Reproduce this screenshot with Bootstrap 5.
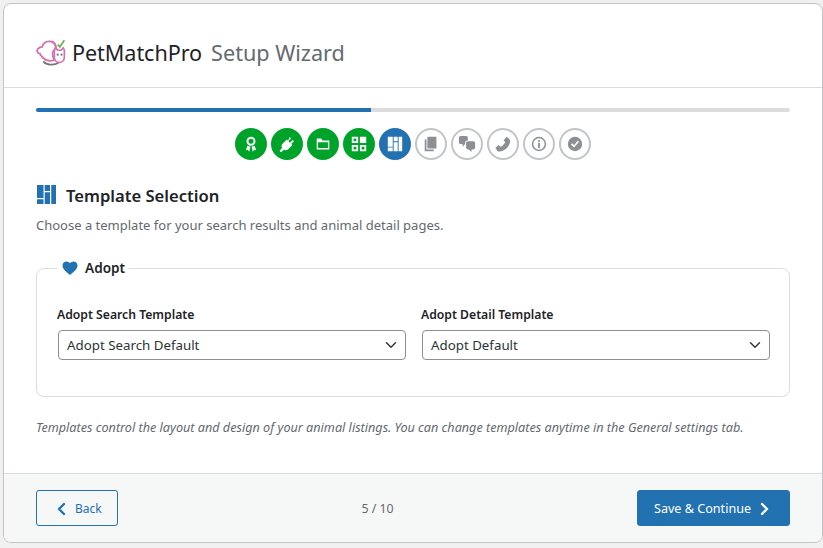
<!DOCTYPE html>
<html lang="en"><head><meta charset="utf-8"><title>PetMatchPro Setup Wizard</title>
<link rel="stylesheet" href="https://cdn.jsdelivr.net/npm/bootstrap@5.3.0/dist/css/bootstrap.min.css">
<style>
html,body{height:548px;overflow:hidden}
body{background:#f0f0f1;font-family:"Noto Sans","Open Sans",sans-serif;color:#1d2327;padding:3px 0 5px 3px}
.wiz{height:540px;width:820px;background:#fff;border:1px solid #c3c4c7;border-radius:8px;overflow:hidden;display:flex;flex-direction:column}
.wiz-head{height:84px;border-bottom:1px solid #dcdcde;padding:14px 32px 0;display:flex;align-items:center;gap:6px}
.wiz-title{font-size:21.6px;font-weight:400;margin:0;line-height:1.2;display:flex;gap:9px}
.wiz-title b{font-weight:400;letter-spacing:-.07px}
.wiz-title span{color:#646970}
.wiz-body{flex:1;padding:20px 32px 0}
.bar-track{height:4px;background:#dcdcde;border-radius:2px;overflow:hidden}
.bar-fill{height:4px;background:#2271b1}
.steps{margin-top:16px;gap:4px}
.dot{width:32px;height:32px;border-radius:50%;display:flex;align-items:center;justify-content:center;border:2px solid #c3c4c7;background:#fff;color:#8c8f94}
.dot.ok{background:#00a32a;border-color:#00a32a;color:#fff}
.dot.cur{background:#2271b1;border-color:#2271b1;color:#fff}
.dot svg{width:18px;height:18px;fill:currentColor;display:block}
.sec-head{margin-top:24px;gap:10px;height:24px}
.sec-head svg{margin:-4px 0 0 1px}
.sec-title{font-size:16.6px;font-weight:600;margin:0;line-height:24px}
.sec-desc{font-size:13px;color:#646970;margin:6px 0 0;line-height:22px}
.field-box{border:1px solid #dcdcde;border-radius:8px;margin-top:22px;height:139px;padding:0 20px}
.field-box legend{float:none;width:auto;font-size:13.6px;font-weight:600;padding:0 3px 0 5px;line-height:20px;display:flex;align-items:center;gap:7px;margin:0 0 27px;color:#1d2327}
.field-box legend svg{width:16px;height:16px;fill:#2271b1}
.cols{gap:16px}
.cols>div{flex:1 1 0;min-width:0}
.flabel{font-size:12.2px;font-weight:600;line-height:20px;display:block;margin-bottom:5px}
.pick{height:30px;padding:2px 24px 0 8px;margin-left:1px;font-size:13.3px;color:#2c3338;border:1px solid #8c8f94;border-radius:4px;background-size:16px 12px;background-position:right 6px center;width:100%}
.hint{font-size:12.64px;font-style:italic;color:#646970;margin:20px 0 0;line-height:20px}
.wiz-foot{height:69px;background:#f6f7f7;border-top:1px solid #dcdcde;padding:16px 32px 0;display:flex;justify-content:space-between;align-items:flex-start}
.foot-mid{font-size:12.3px;color:#646970;line-height:38px}
.go,.back{height:36px;border-radius:3px;display:flex;align-items:center;padding:2px 0 0}
.back{width:82px;font-size:12px;color:#2271b1;border:1px solid #2271b1;background:transparent;gap:9px;padding-left:20px}
.go{width:153px;font-size:12.6px;background:#2271b1;border:1px solid #2271b1;color:#fff;gap:9px;padding-left:16px}
.go svg,.back svg{width:9px;height:14px;fill:none;stroke:currentColor;stroke-width:2.4;stroke-linecap:round;stroke-linejoin:round}
</style></head><body>
<div class="wiz">
<header class="wiz-head">
<svg width="30" height="30" viewBox="1.500 3 27 27" aria-hidden="true">
<path d="M8 24c3 3.500 10 3.800 14 1" fill="none" stroke="#777" stroke-width="1.600"/>
<path d="M3 13c1-1 2-2 4-2 1-3 3-5 6-5 3 0 5 1 6 4l1 3c-1 0-3 1-3.500 3-.5 3 .5 5 1.500 7-4 1-8 0-10-2-2-2-3-3-3-4-2 0-3-2-2-4z" fill="#fff" stroke="#d46fb0" stroke-width="1.600"/>
<path d="M15 6c3 0 5 3 4 7" fill="none" stroke="#d46fb0" stroke-width="1.500"/>
<path d="M18 14l1-2 2 2h3l2-2 1 2v6c0 3-2 5-4.500 5S18 23 18 20z" fill="#fff" stroke="#d46fb0" stroke-width="1.500"/>
<circle cx="21" cy="18" r="1" fill="#777"/><circle cx="24.500" cy="18" r="1" fill="#777"/>
<path d="M21 9l2 2 4-6" fill="none" stroke="#68b34a" stroke-width="1.600"/>
</svg>
<h1 class="wiz-title"><b>PetMatchPro</b><span>Setup Wizard</span></h1>
</header>
<main class="wiz-body">
<div class="bar-track"><div class="bar-fill" style="width:44.4%"></div></div>
<div class="steps d-flex justify-content-center">
<div class="dot ok"><svg viewBox="0 0 20 20"><path fill-rule="evenodd" d="M10 2a5 5 0 1 0 0 10 5 5 0 0 0 0-10zm0 2.200a2.800 2.800 0 1 1 0 5.600 2.800 2.800 0 0 1 0-5.600z"/><path d="M6 12l-1.800 5 2.300-.6L8 18.500l1.300-5.500zm8 0l1.800 5-2.300-.6L12 18.500l-1.300-5.500z"/></svg></div>
<div class="dot ok"><svg viewBox="0 0 20 20"><path d="M13.100 2.300l1.500 1.500-3 3 1.700 1.700 3-3 1.400 1.400-3 3 1.300 1.300-4.700 4.600c-1.300 1.300-3.300 1.500-4.800.6L3.400 19.200 1.700 17.500l2.800-3c-.9-1.500-.7-3.500.6-4.800L9.800 5l1.300 1.300z"/></svg></div>
<div class="dot ok"><svg viewBox="0 0 20 20"><path fill-rule="evenodd" d="M3 4h5l1.500 2H17v10H3zm1.500 4v6.500h11V8z"/></svg></div>
<div class="dot ok"><svg viewBox="0 0 20 20"><path fill-rule="evenodd" d="M2 2h7v7H2zM11 2h7v7h-7zM2 11h7v7H2zM11 11h7v7h-7zM4 4v3h3V4zM13 13v3h3v-3zM4 13v3h3v-3z"/></svg></div>
<div class="dot cur"><svg viewBox="0 0 20 20"><path d="M2 2h5.500v11H2zM8.500 2h4.500v5H8.500zM14 2h4v16h-4zM2 14h5.500v4H2zM8.500 8h4.500v10H8.500z"/></svg></div>
<div class="dot"><svg viewBox="0 0 20 20"><path d="M6 15V2h10v13zM5 16h8v2H3V5h2z"/></svg></div>
<div class="dot"><svg viewBox="0 0 20 20"><path d="M11 6h-.8C9.100 6 8 7.200 8 8.200V10l-3 3v-3H3c-1.100 0-2-.9-2-2V3c0-1.100.9-2 2-2h6c1.100 0 2 .9 2 2zm0 1h6c1.100 0 2 .9 2 2v5c0 1.100-.9 2-2 2h-2v3l-3-3h-1c-1.100 0-2-.9-2-2V9c0-1.100.9-2 2-2z"/></svg></div>
<div class="dot"><svg viewBox="0 0 20 20"><path d="M14 2l4 3.500c.3 4-2 7.500-4.500 9.800C11 17.500 7 18.800 4 18l-2.500-3.500 3.500-3.300 2.500 1.800c2.200-1 4-3 5-5.300L10.500 6z"/></svg></div>
<div class="dot"><svg viewBox="0 0 20 20"><path fill-rule="evenodd" d="M10 2a8 8 0 1 0 0 16 8 8 0 0 0 0-16zm0 1.700a6.300 6.300 0 1 1 0 12.600 6.300 6.300 0 0 1 0-12.600zM9 5.500h2v2H9zM9 8.500h2v6H9z"/></svg></div>
<div class="dot"><svg viewBox="0 0 20 20"><path fill-rule="evenodd" d="M10 2a8 8 0 1 0 0 16 8 8 0 0 0 0-16zM14.500 7.500L9 14l-3.500-3.500 1.300-1.300L9 11.300l4-4.900z"/></svg></div>
</div>
<div class="sec-head d-flex align-items-center">
<svg width="19" height="19" viewBox="2 2 16 16" fill="#2271b1" aria-hidden="true"><path d="M2 2h5.500v11H2zM8.500 2h4.500v5H8.500zM14 2h4v16h-4zM2 14h5.500v4H2zM8.500 8h4.500v10H8.500z"/></svg>
<h2 class="sec-title">Template Selection</h2>
</div>
<p class="sec-desc">Choose a template for your search results and animal detail pages.</p>
<fieldset class="field-box">
<legend><svg viewBox="0 0 16 16"><path d="M8 15C3 11 .5 8.500.5 5.500.5 3 2.500 1.500 4.500 1.500 6 1.500 7.300 2.200 8 3.300 8.700 2.200 10 1.500 11.500 1.500c2 0 4 1.500 4 4 0 3-2.500 5.500-7.500 9.500z"/></svg>Adopt</legend>
<div class="cols d-flex">
<div><label class="flabel" for="s1">Adopt Search Template</label><select id="s1" class="form-select pick"><option>Adopt Search Default</option></select></div>
<div><label class="flabel" for="s2">Adopt Detail Template</label><select id="s2" class="form-select pick"><option>Adopt Default</option></select></div>
</div>
</fieldset>
<p class="hint">Templates control the layout and design of your animal listings. You can change templates anytime in the General settings tab.</p>
</main>
<footer class="wiz-foot">
<button class="btn back"><svg viewBox="0 0 9 14"><path d="M7 2 2 7l5 5"/></svg>Back</button>
<div class="foot-mid">5 / 10</div>
<button class="btn go">Save &amp; Continue<svg viewBox="0 0 9 14"><path d="M2 2l5 5-5 5"/></svg></button>
</footer>
</div>
</body></html>
